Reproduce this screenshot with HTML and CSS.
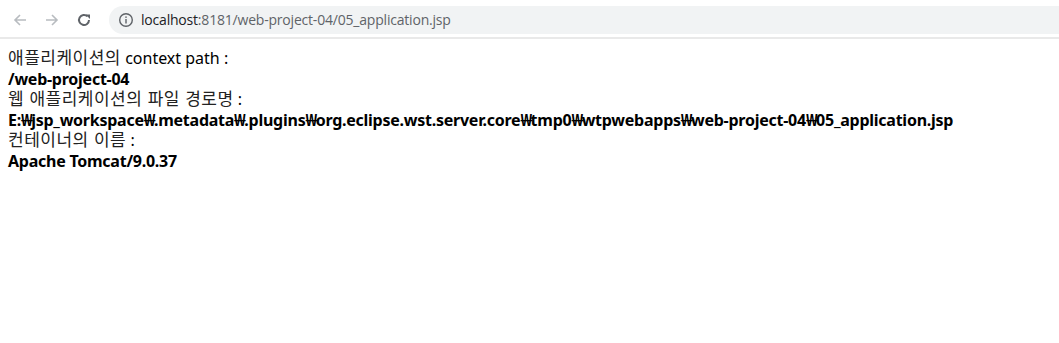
FILE: index.html
```html
<!DOCTYPE html>
<html lang="ko">
<head>
<meta charset="utf-8">
<title>05_application.jsp</title>
<link rel="stylesheet" href="styles.css">
</head>
<body>
<div class="chrome">
  <div class="tabstrip"></div>
  <div class="toolbar">
    <div class="nav">
      <span class="btn disabled">
        <svg width="16" height="16" viewBox="0 0 16 16"><path d="M14 8H3M8 3L3 8l5 5" fill="none" stroke="currentColor" stroke-width="1.6"/></svg>
      </span>
      <span class="btn disabled">
        <svg width="16" height="16" viewBox="0 0 16 16"><path d="M2 8h11M8 3l5 5-5 5" fill="none" stroke="currentColor" stroke-width="1.6"/></svg>
      </span>
      <span class="btn">
        <svg width="16" height="16" viewBox="0 0 16 16"><path d="M13 8a5 5 0 1 1-1.5-3.6" fill="none" stroke="currentColor" stroke-width="2"/><path d="M9.5 2.5h4.5v4.5z" fill="currentColor"/></svg>
      </span>
    </div>
    <div class="omnibox">
      <svg class="info" width="16" height="16" viewBox="0 0 16 16"><circle cx="8" cy="8" r="6.3" fill="none" stroke="currentColor" stroke-width="1.4"/><rect x="7.3" y="7" width="1.4" height="4.5" fill="currentColor"/><rect x="7.3" y="4.4" width="1.4" height="1.5" fill="currentColor"/></svg>
      <span class="url"><span class="host">localhost</span>:8181/web-project-04/05_application.jsp</span>
    </div>
  </div>
</div>
<main class="page">
  <div class="line"><span class="ko">애플리케이션의</span> context path :</div>
  <div class="line b">/web-project-04</div>
  <div class="line"><span class="ko">웹 애플리케이션의 파일 경로명</span> :</div>
  <div class="line b">E:<span class="won">₩</span>jsp_workspace<span class="won">₩</span>.metadata<span class="won">₩</span>.plugins<span class="won">₩</span>org.eclipse.wst.server.core<span class="won">₩</span>tmp0<span class="won">₩</span>wtpwebapps<span class="won">₩</span>web-project-04<span class="won">₩</span>05_application.jsp</div>
  <div class="line"><span class="ko">컨테이너의 이름</span> :</div>
  <div class="line b">Apache Tomcat/9.0.37</div>
</main>
</body>
</html>
```

FILE: styles.css
```css
html, body {
  margin: 0;
  padding: 0;
  background: #fff;
}
.chrome {
  display: flex;
  flex-direction: column;
}
.tabstrip {
  height: 2px;
  background: #fff;
}
.toolbar {
  height: 35px;
  display: flex;
  align-items: center;
  border-bottom: 2px solid #e9e9e9;
  box-sizing: content-box;
}
.nav {
  display: flex;
  align-items: center;
  padding-left: 4px;
}
.btn {
  width: 32px;
  height: 28px;
  display: flex;
  align-items: center;
  justify-content: center;
  color: #5f6368;
}
.btn.disabled {
  color: #b8bcc0;
}
.omnibox {
  flex: 1;
  height: 28px;
  margin-left: 9px;
  background: #f1f3f4;
  border-radius: 14px 0 0 14px;
  display: flex;
  align-items: center;
  padding-left: 9px;
  color: #5f6368;
}
.info {
  color: #5f6368;
}
.url {
  margin-left: 7px;
  font-family: "Open Sans", "Noto Sans", sans-serif;
  font-size: 14px;
  letter-spacing: -0.2px;
  color: #5f6368;
}
.host {
  color: #202124;
}
.page {
  padding: 9px 8px 8px;
  font-family: "Noto Sans", "Noto Sans CJK KR", sans-serif;
  font-size: 16px;
  color: #000;
}
.line {
  height: 20.6px;
  line-height: 20.6px;
  white-space: nowrap;
}
.ko {
  font-family: "Noto Sans CJK KR", sans-serif;
  font-size: 17px;
  line-height: 0;
  letter-spacing: 0.5px;
  color: #222;
}
.b {
  font-weight: bold;
  letter-spacing: -0.25px;
}
.won {
  letter-spacing: -1.6px;
}
```
